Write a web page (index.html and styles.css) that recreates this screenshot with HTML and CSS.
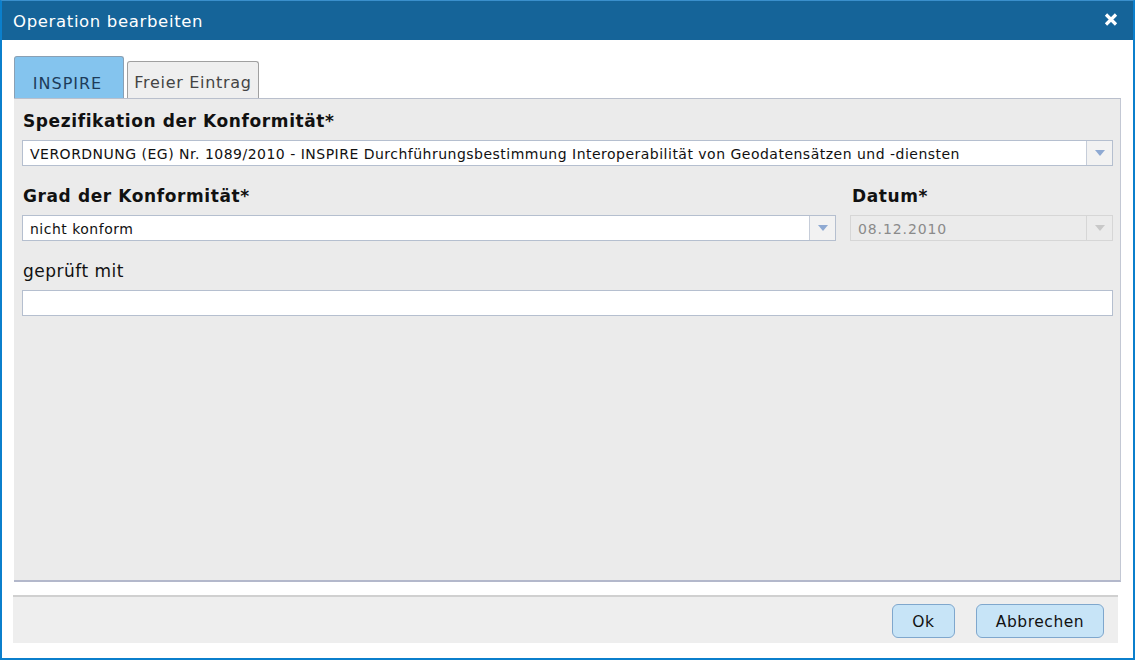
FILE: index.html
```html
<!DOCTYPE html>
<html lang="de">
<head>
<meta charset="utf-8">
<title>Operation bearbeiten</title>
<link rel="stylesheet" href="styles.css">
</head>
<body>
<div class="window">
  <div class="titlebar">
    <span class="title">Operation bearbeiten</span>
    <svg class="close" width="14" height="13" viewBox="0 0 14 13"><path d="M2 1.5 L12 11.5 M12 1.5 L2 11.5" stroke="#fff" stroke-width="3.2" stroke-linecap="butt"/></svg>
  </div>
  <div class="content">
    <div class="tabs">
      <div class="tab active">INSPIRE</div>
      <div class="tab">Freier Eintrag</div>
    </div>
    <div class="panel">
      <div class="label bold">Spezifikation der Konformität*</div>
      <div class="select">
        <span class="value">VERORDNUNG (EG) Nr. 1089/2010 - INSPIRE Durchführungsbestimmung Interoperabilität von Geodatensätzen und -diensten</span>
        <span class="arrow"><svg width="10" height="6" viewBox="0 0 10 6"><path d="M0 0 H10 L5 6 Z" fill="#8ea9d2"/></svg></span>
      </div>
      <div class="row">
        <div class="col">
          <div class="label bold">Grad der Konformität*</div>
          <div class="select">
            <span class="value">nicht konform</span>
            <span class="arrow"><svg width="10" height="6" viewBox="0 0 10 6"><path d="M0 0 H10 L5 6 Z" fill="#8ea9d2"/></svg></span>
          </div>
        </div>
        <div class="col">
          <div class="label bold">Datum*</div>
          <div class="select disabled">
            <span class="value">08.12.2010</span>
            <span class="arrow"><svg width="10" height="6" viewBox="0 0 10 6"><path d="M0 0 H10 L5 6 Z" fill="#c8c8c8"/></svg></span>
          </div>
        </div>
      </div>
      <div class="label">geprüft mit</div>
      <div class="input"></div>
    </div>
    <div class="footer">
      <button class="btn ok">Ok</button>
      <button class="btn cancel">Abbrechen</button>
    </div>
  </div>
</div>
</body>
</html>
```

FILE: styles.css
```css
html, body {
  margin: 0;
  padding: 0;
  background: #ffffff;
}
body {
  font-family: "DejaVu Sans", Verdana, sans-serif;
  color: #111;
}
.window {
  width: 1135px;
  height: 660px;
  box-sizing: border-box;
  border: 2px solid #0b7fcc;
  border-top: 1px solid #3a8fcc;
  display: flex;
  flex-direction: column;
  background: #fff;
}
.titlebar {
  height: 39px;
  background: #156499;
  display: flex;
  align-items: center;
  justify-content: space-between;
  padding: 0 15px 0 11px;
  flex: none;
}
.title {
  color: #fff;
  font-size: 16.5px;
  letter-spacing: 0.65px;
  padding-top: 2px;
}
.close {
  display: block;
  margin-top: -3px;
}
.content {
  flex: 1;
  display: flex;
  flex-direction: column;
  padding: 16px 12px 14px 12px;
}
.tabs {
  display: flex;
  align-items: flex-end;
  gap: 3px;
  height: 42px;
}
.tab {
  box-sizing: border-box;
  height: 37px;
  width: 132px;
  justify-content: center;
  border: 1px solid #a0a0a0;
  border-bottom: none;
  border-radius: 3px 3px 0 0;
  background: #efefef;
  color: #444;
  font-size: 16px;
  letter-spacing: 0.7px;
  display: flex;
  align-items: center;
  padding-top: 4px;
}
.tab.active {
  height: 42px;
  width: 110px;
  background: #84c4ee;
  color: #1d3c5a;
  border-color: #8aa0b4;
  letter-spacing: 1px;
  padding-top: 12px;
  padding-right: 3px;
}
.panel {
  box-sizing: border-box;
  height: 484px;
  background: #ebebeb;
  border-top: 1px solid #b9bfcc;
  border-right: 1px solid #c3c8d4;
  border-bottom: 2px solid #b3b8cb;
  padding: 8px 7px 0 8px;
  display: flex;
  flex-direction: column;
}
.label {
  font-size: 17px;
  letter-spacing: 0.5px;
  color: #111;
  height: 33px;
  line-height: 28px;
  padding-left: 1px;
}
.label.bold {
  font-weight: bold;
  font-size: 17px;
  letter-spacing: 0.6px;
}
.col + .col .label {
  padding-left: 2px;
}
.select, .input {
  box-sizing: border-box;
  height: 26px;
  background: #fff;
  border: 1px solid #b5bfcf;
  display: flex;
  align-items: stretch;
}
.select .value {
  flex: 1;
  font-size: 14px;
  letter-spacing: 0.49px;
  line-height: 26px;
  padding-left: 7px;
  white-space: nowrap;
  overflow: hidden;
}
.select .arrow {
  width: 25px;
  flex: none;
  border-left: 1px solid #c6cdd9;
  background: #f2f2f2;
  display: flex;
  align-items: center;
  justify-content: center;
}
.select.disabled {
  background: #ebebeb;
  border-color: #d6d6d6;
}
.select.disabled .value {
  color: #8a8a8a;
  letter-spacing: 0.9px;
}
.select.disabled .arrow {
  background: #ebebeb;
  border-left-color: #d6d6d6;
}
.row {
  display: grid;
  grid-template-columns: 1fr 263px;
  column-gap: 14px;
  margin-top: 16px;
  margin-bottom: 16px;
}
.col {
  display: flex;
  flex-direction: column;
}
.footer {
  margin-top: 13px;
  box-sizing: border-box;
  height: 48px;
  margin-right: 3px;
  margin-left: -1px;
  background: #eeeeee;
  border-top: 2px solid #d0d0d0;
  display: flex;
  justify-content: flex-end;
  align-items: center;
  gap: 21px;
  padding-right: 14px;
  padding-top: 2px;
}
.btn {
  box-sizing: border-box;
  height: 34px;
  background: #c7e4f7;
  border: 1px solid #7fa7cd;
  border-radius: 6px;
  font-family: "DejaVu Sans", Verdana, sans-serif;
  font-size: 15.5px;
  letter-spacing: 0.55px;
  color: #111;
  padding: 2px 0 0 0;
}
.btn.ok {
  width: 63px;
}
.btn.cancel {
  width: 128px;
}
```
